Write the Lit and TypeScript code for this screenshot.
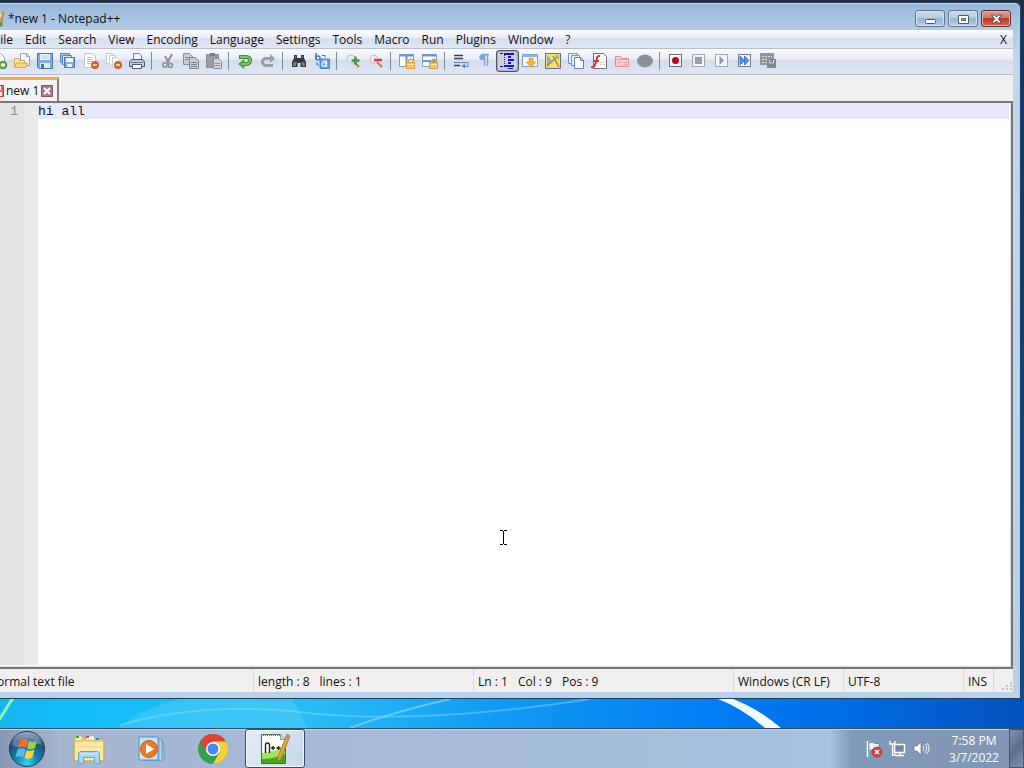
import { LitElement, html, svg, css, SVGTemplateResult } from "lit";
import { customElement, property, state } from "lit/decorators.js";
import { classMap } from "lit/directives/class-map.js";

// Shared 16x16 shapes
const lock = svg`
  <path d="M9.5 10V8.5a2 2 0 0 1 4.5 0V10" fill="none" stroke="#d9a348" stroke-width="1.3"/>
  <rect x="7.5" y="9.5" width="8" height="6" fill="#f8c35c" stroke="#e0a040"/>
  <path d="M8 11.5h7" stroke="#fce3a6"/>`;

const minusBadge = svg`
  <circle cx="12" cy="12" r="3.7" fill="#de6026" stroke="#b8481c" stroke-width=".6"/>
  <path d="M10 12h4" stroke="#fff" stroke-width="1.4"/>`;

const recordFrame = (color: string) => svg`
  <rect x="1.5" y="1.5" width="12" height="12" fill="#f4f5fb" stroke=${color}/>`;

const ICONS: Record<string, SVGTemplateResult> = {
  new: svg`
    <path d="M2.5.5h7l4 4v10h-11z" fill="#fff" stroke="#9aa7b8"/>
    <circle cx="12" cy="12" r="3.7" fill="#6fb65b" stroke="#3f8433"/>
    <path d="M10 12h4M12 10v4" stroke="#fff" stroke-width="1.3"/>`,
  open: svg`
    <path d="M6.500.5h6l3 3v9h-9z" fill="#f4f8ff" stroke="#83a6d8"/>
    <path d="M12.500.5v3h3" fill="none" stroke="#83a6d8"/>
    <path d="M.5 14.5v-9h4l1 2h5v7z" fill="#fde9a9" stroke="#dba548"/>
    <path d="M.5 14.5l2-4.5h11l-2 4.5z" fill="#fbd77c" stroke="#dba548"/>`,
  save: svg`
    <path d="M.5.5h15v15H2l-1.5-1.5z" fill="#7eacdd" stroke="#4876b4"/>
    <path d="M3 1h10v6H3z" fill="#edf5fd"/>
    <path d="M4 3h8M4 5h8" stroke="#adc8e5"/>
    <path d="M3 10h10v5H3z" fill="#dfeaf5"/>
    <path d="M4 11h3v4H4z" fill="#4876b4"/>`,
  saveAll: svg`
    <path d="M.5.5h9v9h-9z" fill="#acc9eb" stroke="#5583bf"/>
    <path d="M2.5 2.5h9v9h-9z" fill="#d8e7f8" stroke="#5583bf"/>
    <path d="M4.5 4.5h10v10h-10z" fill="#7eacdd" stroke="#4876b4"/>
    <path d="M6 5h7v4H6z" fill="#f4f9ff"/><path d="M7 11h5v3H7z" fill="#e9f2fb"/>`,
  close: svg`
    <path d="M1.500.5h8l3 3v11h-11z" fill="#fff" stroke="#bfc4cd"/>
    <path d="M4 4.5h5M4 6.5h6M4 8.5h6M4 10.5h4" stroke="#e3b8a4"/>
    ${minusBadge}`,
  closeAll: svg`
    <path d="M.5.5h6v10h-6z" fill="#fff" stroke="#c7cbd3"/>
    <path d="M3.5 2.5h6v10h-6z" fill="#fff" stroke="#c7cbd3"/>
    <path d="M6.5 4.5h5l2 2v8h-7z" fill="#fff" stroke="#c7cbd3"/>
    ${minusBadge}`,
  print: svg`
    <path d="M4.5 7.5v-7h6l2 2v5" fill="#eaf3ff" stroke="#6789ae"/>
    <path d="M.5 13.5V9l2-2.5h11l2 2.5v4.5z" fill="#c2c9d2" stroke="#4e5a69"/>
    <path d="M2 9.5h12" stroke="#6f7986"/>
    <path d="M3.5 11.5h9v4h-9z" fill="#fff" stroke="#4e5a69"/>`,
  cut: svg`
    <path d="M12 1L7 10M5 3l4 7" stroke="#8b8e96" stroke-width="2" fill="none"/>
    <circle cx="5" cy="12" r="2.2" fill="none" stroke="#8b8e96" stroke-width="1.5"/>
    <circle cx="10.5" cy="12.5" r="2" fill="none" stroke="#8b8e96" stroke-width="1.5"/>`,
  copy: svg`
    <path d="M.5.5h6l3 3v8h-9z" fill="#c9cbd0" stroke="#8b8e96"/>
    <path d="M2 4.5h5M2 6.5h5" stroke="#8b8e96"/>
    <path d="M6.5 4.5h6l3 3v8h-9z" fill="#c9cbd0" stroke="#80838b"/>
    <path d="M8 9.5h6M8 11.5h6M8 13.5h6" stroke="#80838b"/>`,
  paste: svg`
    <path d="M.5 1.5h12v13H.5z" fill="#999ba0" stroke="#898b91"/>
    <path d="M4 0h5v3H4z" fill="#7d7f84"/>
    <path d="M7.5 5.5h5l3 3v7h-8z" fill="#d1d3d8" stroke="#8b8e96"/>
    <path d="M9 10.5h5M9 12.5h5" stroke="#8b8e96"/>`,
  undo: svg`
    <path d="M2 4h7.5a3.5 3.5 0 0 1 0 7H6" fill="none" stroke="#3f8b35" stroke-width="4"/>
    <path d="M7 6.5v9L1.5 11z" fill="#58a64b" stroke="#3f8b35" stroke-width=".6"/>
    <path d="M3 4h6.5a3.5 3.5 0 0 1 0 7H5" fill="none" stroke="#7cc26c" stroke-width="2"/>`,
  redo: svg`
    <path d="M11 5.5H6a3.5 3.5 0 0 0 0 7h7" fill="none" stroke="#9a9ca2" stroke-width="3"/>
    <path d="M10 1v9l5-4.5z" fill="#9a9ca2"/>`,
  find: svg`
    <path d="M3 2h3v3h4V2h3v3l2 4v5h-5.5v-4h-3v4H1V9l2-4z" fill="#34373d"/>
    <path d="M2.5 10h3M10.5 10h3M4 4h1M11 4h1M2 12h3M11 12h3" stroke="#bcc1ca"/>`,
  replace: svg`
    <path d="M2 0v7" stroke="#3c7ac8" stroke-width="1.6"/>
    <circle cx="4" cy="5" r="2" fill="none" stroke="#3c7ac8" stroke-width="1.3"/>
    <path d="M8 2.5h3v2M3 9v3h2" fill="none" stroke="#3c7ac8"/>
    <path d="M6 6h9.500v9.500H6z" fill="#63a0e4" stroke="#3a78c4" stroke-width=".8"/>
    <circle cx="10" cy="11.3" r="2" fill="none" stroke="#e8f3ff" stroke-width="1.2"/>
    <path d="M8.5 8h4v6" fill="none" stroke="#e8f3ff" stroke-width="1.2"/>`,
  zoomIn: svg`
    <circle cx="6" cy="6" r="4" fill="#e2ecf7" stroke="#b9c7d7"/>
    <path d="M9 9l5 5" stroke="#b5764d" stroke-width="2"/>
    <path d="M10.5 3.500v8M6.500 7.500h8" stroke="#459a3a" stroke-width="2.500"/>`,
  zoomOut: svg`
    <circle cx="6" cy="6" r="4" fill="#f0eaf5" stroke="#d6bbc8"/>
    <path d="M9 9l5 5" stroke="#c97868" stroke-width="2"/>
    <path d="M6 7h8" stroke="#d8404a" stroke-width="2.5"/>`,
  syncV: svg`
    <path d="M.5 1.5h14v12H.5z" fill="#fff" stroke="#7ea0cc"/>
    <path d="M.5 2.5h14M7.5 3v10" stroke="#6d93c8" stroke-width="2"/>${lock}`,
  syncH: svg`
    <path d="M.5 1.5h14v12H.5z" fill="#fff" stroke="#7ea0cc"/>
    <path d="M.5 2.5h14M1 8h14" stroke="#6d93c8" stroke-width="2"/>${lock}`,
  wrap: svg`
    <path d="M1 2.5h9M1 5.5h9M1 12.5h6" stroke="#3b3f48" stroke-width="1.4"/>
    <path d="M1 9.5h14v4H11" fill="none" stroke="#6385c7"/>
    <path d="M12 10.5v5L8.5 13z" fill="#6385c7"/>`,
  symbols: svg`
    <path d="M8 1.5H6a2.7 2.7 0 0 0 0 5.5h2z" fill="#78a7df"/>
    <path d="M8.5 1v12M11.5 1v12M6 1.5h7" stroke="#78a7df" stroke-width="1.5"/>`,
  indent: svg`
    <path d="M5 1h10M9 4h3M9 7h6M9 10h3M5 13h10" stroke="#1414d2" stroke-width="2"/>
    <path d="M1 .5h3M1 13.5h3M9 15.5h5" stroke="#1414d2"/>
    <path d="M5.500 2v12" stroke="#1414d2" stroke-dasharray="1 1"/>`,
  language: svg`
    <path d="M.5 1.5h15v12H.5z" fill="#f7fbff" stroke="#7ea0cc"/>
    <path d="M1 3h14" stroke="#92b5e4" stroke-width="2"/>
    <path d="M7 5h4v4h3l-5 5.500-5-5.500h3z" fill="#f5b53d" stroke="#dc992c" stroke-width=".6"/>`,
  map: svg`
    <path d="M.5.5h15v15H.5z" fill="#efdf82" stroke="#67707b"/>
    <path d="M2 2l5 6-5 6z" fill="#85aed3"/>
    <path d="M2 13L13 3M8 3l6 11" stroke="#af8739" stroke-width="1.5"/>
    <path d="M10 2h4v5z" fill="#99bd69"/>`,
  docList: svg`
    <path d="M.5.5h9v10h-9z" fill="#e9f2fe" stroke="#6d93c8"/>
    <path d="M3.5 2.5h8v10h-8z" fill="#e9f2fe" stroke="#6d93c8"/>
    <path d="M6.5 4.5h6l3 3v8h-9z" fill="#fff" stroke="#5a88c4"/>
    <path d="M12.5 4.5v3h3" fill="none" stroke="#5a88c4"/>`,
  functions: svg`
    <path d="M2.500.5h10l3 3v12h-13z" fill="#fff" stroke="#6c7078"/>
    <path d="M9 3Q6 2.500 6 6L4 12q-1 3-4 2M3 8h5" fill="none" stroke="#cf343d" stroke-width="2"/>
    <path d="M10 9v4M13 9v4" stroke="#989ca6" stroke-dasharray="1 1"/>`,
  folder: svg`
    <path d="M1.5 13.5v-10h5l1 2h7v8z" fill="#f7cdd4" stroke="#df8c9a"/>
    <path d="M2 6.5h12M4 9.5h3M9 9.5h4M9 11.5h4" stroke="#e9a0ac"/>`,
  monitor: svg`
    <ellipse cx="8" cy="8" rx="8" ry="6.5" fill="#909298"/>
    <path d="M2 8q6-6 12 0q-6 6-12 0" fill="none" stroke="#83858a"/>`,
  record: svg`${recordFrame("#6d717a")}<circle cx="7.5" cy="7.5" r="3.5" fill="#bd0914"/>`,
  stop: svg`${recordFrame("#a2a5ad")}<path d="M4 4h7v7H4z" fill="#999ca3"/>`,
  play: svg`${recordFrame("#a2a5ad")}<path d="M5.5 3v9l4.5-4.5z" fill="#92959d"/>`,
  playMany: svg`${recordFrame("#737b8b")}
    <path d="M3 3v9l4.5-4.5zM7.5 3v9L12 7.5z" fill="#4c92ef" stroke="#2a67c8" stroke-width=".8"/>`,
  saveMacro: svg`
    <path d="M0 0h14v12H0z" fill="#92949a"/>
    <path d="M2 3.5h10M2 6.5h6M2 9.5h5" stroke="#d5d7dd" stroke-dasharray="2 1"/>
    <path d="M7 6h9v9H7z" fill="#85878d"/><path d="M9.5 7v3h4V7" stroke="#d5d7dd" fill="none"/>`,
};

const TOOLBAR: string[][] = [
  ["new", "open", "save", "saveAll", "close", "closeAll", "print"],
  ["cut", "copy", "paste"],
  ["undo", "redo"],
  ["find", "replace"],
  ["zoomIn", "zoomOut"],
  ["syncV", "syncH"],
  ["wrap", "symbols", "indent", "language", "map", "docList", "functions", "folder", "monitor"],
  ["record", "stop", "play", "playMany", "saveMacro"],
];

const MENU = [
  "File", "Edit", "Search", "View", "Encoding", "Language", "Settings",
  "Tools", "Macro", "Run", "Plugins", "Window", "?",
];

// Notepad++ logo, 32x32
const npp = svg`
  <path d="M2.500 1.500h19l5 5v24h-24z" fill="#fbfcf8" stroke="#53604d"/>
  <path d="M3 20Q14 19 26 14v16H3z" fill="#a5e35c"/>
  <path d="M3 26q12 0 23-5v9H3z" fill="#44a71d"/>
  <path d="M4 2h18" stroke="#69716a" stroke-width="2" stroke-dasharray="1 1"/>
  <path d="M21.500 1.500v5h5" fill="#dfe4dc" stroke="#8b9388"/>
  <path d="M6.500 20v-8q0-2 2-2t2 2v8M12 15h4M14 13v4M17.500 15h4M19.500 13v4" fill="none" stroke="#1d2b17" stroke-width="1.4"/>
  <path d="M28 1l3 2-9 23-4 3 1-5z" fill="#e9a23e" stroke="#9d692b" stroke-width=".8"/>
  <path d="M28 1l3 2-1.500 4-3-2z" fill="#b98b8b"/>`;

@customElement("npp-toolbar")
export class NppToolbar extends LitElement {
  @state() private pressed = "indent";

  render() {
    return html`
      <div class="toolbar" role="toolbar">
        ${TOOLBAR.map(
          (group, i) => html`
            ${i > 0 ? html`<span class="separator"></span>` : ""}
            ${group.map(
              (name) => html`
                <button
                  class=${classMap({ tool: true, pressed: name === this.pressed })}
                  aria-label=${name}
                >
                  <svg viewBox="0 0 16 16">${ICONS[name]}</svg>
                </button>
              `
            )}
          `
        )}
      </div>
    `;
  }

  static styles = css`
    :host {
      display: block;
    }

    .toolbar {
      display: flex;
      align-items: flex-start;
      box-sizing: border-box;
      height: 26px;
      padding-top: 1px;
      border-bottom: 1px solid #b9bdc9;
      background: linear-gradient(#fafbfe, #e9edf7 40%, #d7dcec 45%, #e1e6f4);
    }

    .tool {
      display: flex;
      flex: none;
      align-items: center;
      box-sizing: border-box;
      width: 23px;
      height: 22px;
      padding: 0 2px;
      border: 1px solid transparent;
      border-radius: 3px;
      background: none;
    }

    .tool svg {
      flex: none;
      width: 16px;
      height: 16px;
    }

    .pressed {
      border-color: #4f525b;
      background: #cdd1df;
      box-shadow: inset 0 0 2px #585c68;
    }

    .separator {
      flex: none;
      width: 1px;
      height: 18px;
      margin: 2px 5px 0 2px;
      background: #868b98;
    }
  `;
}

@customElement("npp-window")
export class NppWindow extends LitElement {
  @property() name = "new 1";
  @property() text = "hi all";

  render() {
    return html`
      <header class="title">
        <svg class="logo" viewBox="0 0 32 32">${npp}</svg>
        <span class="caption">*${this.name} - Notepad++</span>
        <button class="control" aria-label="Minimize">
          <svg viewBox="0 0 16 12"><rect x="3.5" y="6.5" width="10" height="4" rx="1" fill="#fff" stroke="#4d5966"/></svg>
        </button>
        <button class="control" aria-label="Restore">
          <svg viewBox="0 0 16 12"><path d="M3.5 2.5h10v8h-10zM6.5 5.5h4v2h-4z" fill="#fff" stroke="#4d5966" fill-rule="evenodd"/></svg>
        </button>
        <button class="control exit" aria-label="Close">
          <svg viewBox="0 0 16 12"><path d="M3.5 2h3l2 2 2-2h3l-3 4 3 4h-3l-2-2-2 2h-3l3-4z" fill="#fff" stroke="#59434a"/></svg>
        </button>
      </header>
      <nav class="menu">
        ${MENU.map((item) => html`<button class="item">${item}</button>`)}
        <button class="item last" aria-label="Close document">X</button>
      </nav>
      <npp-toolbar></npp-toolbar>
      <div class="tabs">
        <div class="tab">
          <svg class="disk" viewBox="0 0 12 12">
            <path d="M.5.5h11v11H.5z" fill="#ef6462" stroke="#c63434"/>
            <path d="M3 1h6v4H3zM3 7h7v4H3z" fill="#fff0ee"/>
          </svg>
          <button class="tab-name">${this.name}</button>
          <button class="tab-close" aria-label="Close tab">
            <svg viewBox="0 0 12 12">
              <path d="M.5.5h11v11H.5z" fill="#a77886" stroke="#865569"/>
              <path d="M3 3l6 6M9 3L3 9" stroke="#fff" stroke-width="2"/>
            </svg>
          </button>
        </div>
      </div>
      <main class="editor">
        <div class="gutter">1</div>
        <textarea class="code" aria-label="Document" spellcheck="false" .value=${this.text}></textarea>
      </main>
      <footer class="status">
        <span class="cell type">Normal text file</span>
        <span class="cell"><span>length : 8</span><span>lines : 1</span></span>
        <span class="cell"><span>Ln : 1</span><span>Col : 9</span><span>Pos : 9</span></span>
        <span class="cell">Windows (CR LF)</span>
        <span class="cell">UTF-8</span>
        <span class="cell">INS</span>
        <span class="cell grip">
          <svg viewBox="0 0 12 12"><path d="M9 3h2M5 6h2M9 6h2M1 9h2M5 9h2M9 9h2" stroke="#c4c4c4" stroke-width="2"/></svg>
        </span>
      </footer>
    `;
  }

  static styles = css`
    :host {
      display: flex;
      flex-direction: column;
      box-sizing: border-box;
      padding: 0 7px 6px;
      border: 1px solid #20405c;
      border-radius: 6px 6px 0 0;
      background: linear-gradient(#98b7da, #b3cbe6 27px, #c3d7ec 60px, #b9d1ea);
      box-shadow: inset -1px 0 #8fdcf2, inset 0 1px #c3d7ea;
      font: 12px/16px "Open Sans", "Noto Sans", sans-serif;
      color: #111;
    }

    button {
      padding: 0;
      border: 0;
      background: none;
      font: inherit;
      color: inherit;
    }

    .title {
      display: flex;
      align-items: center;
      gap: 3px;
      box-sizing: border-box;
      height: 27px;
      padding: 4px 2px 0 1px;
    }

    .logo {
      flex: none;
      width: 16px;
      height: 16px;
    }

    .caption {
      flex: 1;
      white-space: nowrap;
    }

    .control {
      display: flex;
      align-items: center;
      justify-content: center;
      box-sizing: border-box;
      width: 30px;
      height: 17px;
      border: 1px solid #61758d;
      border-radius: 3px;
      background: linear-gradient(#cbdcec, #b7cce2 50%, #99b3d0 50%, #b5cde5);
      box-shadow: inset 0 0 0 1px #d3e2f0;
    }

    .control svg {
      width: 16px;
      height: 12px;
    }

    .exit {
      border-color: #612c32;
      background: linear-gradient(#dda199, #cf7467 50%, #b93825 50%, #cf6a54);
      box-shadow: inset 0 0 0 1px #e4ada3;
    }

    .menu {
      display: flex;
      box-sizing: border-box;
      height: 19px;
      padding-top: 2px;
      border-bottom: 1px solid #b9bdc9;
      background: linear-gradient(#fdfdff, #eceff8 40%, #d8deee 50%, #e2e7f4);
    }

    .item {
      padding: 0 6px;
    }

    .last {
      margin-left: auto;
    }

    .tabs {
      display: flex;
      align-items: flex-end;
      height: 26px;
      background: #f0f0f0;
    }

    .tab {
      display: flex;
      align-items: center;
      gap: 2px;
      box-sizing: border-box;
      height: 24px;
      padding: 0 4px;
      border-top: 3px solid #faaa3c;
      border-right: 2px solid #85858a;
      background: #f4f4f6;
    }

    .disk,
    .tab-close,
    .tab-close svg {
      display: block;
      width: 12px;
      height: 12px;
    }

    .editor {
      display: flex;
      flex: 1;
      min-height: 0;
      border: solid #77777b;
      border-width: 2px 2px 2px 0;
      box-shadow: inset -1px -1px #dcdcdc;
      background: #fff;
    }

    .gutter,
    .code {
      padding-top: 1px;
      font: 13px/16px "Liberation Mono", monospace;
    }

    .gutter {
      width: 50px;
      box-sizing: border-box;
      padding-right: 20px;
      margin-bottom: 2px;
      background: linear-gradient(90deg, #e4e4e4 36px, #eaeaea 36px);
      color: #8b8b8b;
      text-align: right;
    }

    .code {
      flex: 1;
      margin: 0 2px 2px 0;
      padding: 1px 0 0;
      border: 0;
      outline: 0;
      resize: none;
      background: linear-gradient(#e8e8fd 16px, #fff 16px);
      color: #10101c;
    }

    .status {
      display: grid;
      grid-template-columns: 1fr 220px 260px 110px 120px 30px 20px;
      height: 23px;
      background: #f1efee;
    }

    .cell {
      display: flex;
      align-items: center;
      gap: 10px;
      padding: 2px 0 0 4px;
      border-left: 1px solid #d9d9d9;
      white-space: nowrap;
    }

    .type {
      padding-left: 0;
      border: 0;
    }

    .grip {
      align-items: flex-end;
      justify-content: flex-end;
    }

    .grip svg {
      width: 12px;
      height: 12px;
    }
  `;
}

@customElement("task-bar")
export class TaskBar extends LitElement {
  render() {
    return html`
      <button class="start" aria-label="Start">
        <svg viewBox="0 0 38 38">
          <defs>
            <radialGradient id="orb" cx=".5" cy=".9" r=".85">
              <stop offset="0" stop-color="#35d6f2"/>
              <stop offset=".4" stop-color="#157eae"/>
              <stop offset=".8" stop-color="#234d73"/>
              <stop offset="1" stop-color="#93a8ba"/>
            </radialGradient>
          </defs>
          <circle cx="19" cy="19" r="17.5" fill="url(#orb)" stroke="#1c3c58"/>
          <path d="M4 15a15.500 13 0 0 1 30 0q-8-3-15 1-8 3-15-1z" fill="#fff" opacity=".25"/>
          <path d="M12 10q4-2.500 8 0l-2 8q-4-2.500-8 0z" fill="#f26a30"/>
          <path d="M21 11q4 2 8-.5L27 18q-4 2.500-8 .5z" fill="#9ed048"/>
          <path d="M9.500 19.500q4-2.500 8 0l-2 8q-4-2.500-8 0z" fill="#58b8ec"/>
          <path d="M18.500 20q4 2 8-.5l-2 8q-4 2.500-8 .5z" fill="#fbd047"/>
        </svg>
      </button>
      <button class="task" aria-label="Explorer">
        <svg viewBox="0 0 32 32">
          <path d="M1 28V3h9l2 3h19v22z" fill="#e9cd71" stroke="#c6a952"/>
          <path d="M3 5h5M13 5h8" stroke="#fff" stroke-width="3"/>
          <path d="M3 4h3" stroke="#2c9b45" stroke-width="2"/>
          <path d="M13 4h3" stroke="#d54a38" stroke-width="2"/>
          <path d="M23 6h3" stroke="#3683cc" stroke-width="2"/>
          <path d="M2 9h28v18H2z" fill="#fbe9a4"/>
          <path d="M2 14h28M2 19h28" stroke="#f2d984"/>
          <path d="M5.5 30.5v-10l2-2h17l2 2v10h-5v-6h-11v6z" fill="#a4d6f3" stroke="#5ba6d4"/>
          <path d="M7 21h18" stroke="#e1f5ff"/>
        </svg>
      </button>
      <button class="task" aria-label="Media Player">
        <svg viewBox="0 0 32 32">
          <path d="M9 5l18 2v21l-18-1z" fill="#b4d7eb" stroke="#679bbd"/>
          <path d="M24 5v22M28 8l2 18-4 1" stroke="#73abd0" fill="none"/>
          <path d="M4 4h19v23H4z" fill="#c5e4f4" stroke="#4f93bd"/>
          <circle cx="14" cy="16" r="8.5" fill="#ee7824" stroke="#c65c18"/>
          <path d="M11 11v10l8-5z" fill="#fff"/>
        </svg>
      </button>
      <button class="task" aria-label="Chrome">
        <svg viewBox="0 0 32 32">
          <circle cx="16" cy="16" r="15" fill="#34a04f"/>
          <path d="M16 16L3 8.500A15 15 0 0 1 29 8.500H16z" fill="#dc4437"/>
          <path d="M29 8.500A15 15 0 0 1 16 31l6.500-11.500L16 8.500z" fill="#fbce3d"/>
          <path d="M3 8.500L9.500 19.500L16 16L16 8.500z" fill="#dc4437"/>
          <circle cx="16" cy="16" r="7" fill="#fff"/>
          <circle cx="16" cy="16" r="5.5" fill="#4688f0"/>
        </svg>
      </button>
      <button class="task active" aria-label="Notepad++">
        <svg viewBox="0 0 32 32">${npp}</svg>
      </button>
      <div class="tray">
        <svg viewBox="0 0 18 18">
          <path d="M2.5 1v16" stroke="#fff" stroke-width="1.5"/>
          <path d="M4 2.5q4-1 6 1h4v7H9q-2-1-5 0z" fill="#eef2f7" stroke="#59687d" stroke-width=".6"/>
          <circle cx="12" cy="12" r="5" fill="#d5443b" stroke="#8b2d30" stroke-width=".6"/>
          <path d="M10 10l4 4M14 10l-4 4" stroke="#fff" stroke-width="1.5"/>
        </svg>
        <svg viewBox="0 0 18 18">
          <path d="M5.5 4.5h10v8h-10zM11 13v3M7 15.5h8" fill="#728aa7" stroke="#fff" stroke-width="1.5"/>
          <path d="M1 1v3h5V1M3.5 4v11H7" fill="none" stroke="#fff" stroke-width="1.3"/>
        </svg>
        <svg viewBox="0 0 18 18">
          <path d="M1 6h3l4-4v13l-4-4H1z" fill="#fff" stroke="#5e6c80" stroke-width=".6"/>
          <path d="M10 6q2 3 0 5M12 4q3.5 4.5 0 9M14 3q4 5.5 0 11" fill="none" stroke="#eef2f7"/>
        </svg>
      </div>
      <time class="clock"><span>7:58 PM</span><span>3/7/2022</span></time>
      <button class="peek" aria-label="Show desktop"></button>
    `;
  }

  static styles = css`
    :host {
      display: flex;
      align-items: stretch;
      box-sizing: border-box;
      height: 40px;
      border-top: 1px solid #2b5273;
      background: linear-gradient(
        90deg,
        #8698b3,
        #a5b6cf 60px,
        #a5b9d5 240px,
        #a8c1de calc(100% - 194px),
        #8299b8 calc(100% - 172px),
        #8096b3
      );
      box-shadow: inset 0 1px #c0d2e5;
      font: 12px/17px "Open Sans", "Noto Sans", sans-serif;
    }

    button {
      display: flex;
      align-items: center;
      justify-content: center;
      box-sizing: border-box;
      padding: 0;
      border: 0;
      background: none;
    }

    .start {
      width: 54px;
      margin-right: 5px;
    }

    .start svg {
      width: 38px;
      height: 38px;
    }

    .task {
      width: 60px;
      margin-right: 2px;
    }

    .task svg {
      width: 32px;
      height: 32px;
    }

    .active {
      border: 1px solid #394e66;
      border-radius: 3px;
      background: linear-gradient(110deg, #e5edf6, #c7d7e8);
      box-shadow: inset 0 0 0 1px #f3f8fc;
    }

    .tray {
      display: flex;
      align-items: center;
      gap: 6px;
      margin: 0 8px 0 auto;
    }

    .tray svg {
      width: 18px;
      height: 18px;
    }

    .clock {
      display: flex;
      flex-direction: column;
      justify-content: center;
      width: 70px;
      color: #fff;
      text-align: center;
    }

    .peek {
      width: 15px;
      border: 1px solid #42566f;
      background: linear-gradient(135deg, #8093aa, #59708d 50%, #7d91ac);
    }
  `;
}

@customElement("app-root")
export class AppRoot extends LitElement {
  render() {
    return html`
      <npp-window class="window"></npp-window>
      <svg class="wallpaper" viewBox="0 0 1024 29" preserveAspectRatio="none">
        <defs>
          <linearGradient id="sky">
            <stop offset="0" stop-color="#19b4ef"/>
            <stop offset=".06" stop-color="#12bdf8"/>
            <stop offset=".3" stop-color="#2abdf5"/>
            <stop offset=".48" stop-color="#129bf3"/>
            <stop offset=".7" stop-color="#017df5"/>
            <stop offset=".85" stop-color="#0068df"/>
            <stop offset="1" stop-color="#0452bd"/>
          </linearGradient>
        </defs>
        <path d="M0 0h1024v29H0z" fill="url(#sky)"/>
        <path d="M118 29Q145 8 180 0h112q8 12 15 29z" fill="#7fdbf2" opacity=".25"/>
        <path d="M120 26Q200 4 290 12q120 16 300-12" fill="none" stroke="#8fe3fc" stroke-width="2" opacity=".4"/>
        <path d="M350 29Q390 14 450 0" fill="none" stroke="#91dcf8" stroke-width="2" opacity=".6"/>
        <path d="M-1 21L13-1" stroke="#8df5ad" stroke-width="3"/>
        <path d="M718 0h15q26 10 48 29h-16Q742 9 718 0z" fill="#eefbff"/>
      </svg>
      <task-bar></task-bar>
      <svg class="pointer" viewBox="0 0 9 17">
        <path d="M1 1.5h3M5 1.5h3M4.5 2v13M1 15.5h3M5 15.5h3" stroke="#000"/>
      </svg>
    `;
  }

  static styles = css`
    :host {
      position: relative;
      display: flex;
      flex-direction: column;
      height: 100vh;
      overflow: hidden;
      background: linear-gradient(#242b42, #0a3870 30px, #06519f);
    }

    /* The window is dragged partly past the left edge of the screen */
    .window {
      flex: 1;
      min-height: 0;
      margin: 2px 3px 0 -20px;
    }

    .wallpaper {
      display: block;
      flex: none;
      width: 100%;
      height: 29px;
    }

    .pointer {
      position: absolute;
      left: 499px;
      top: 529px;
      width: 9px;
      height: 17px;
      pointer-events: none;
    }
  `;
}
